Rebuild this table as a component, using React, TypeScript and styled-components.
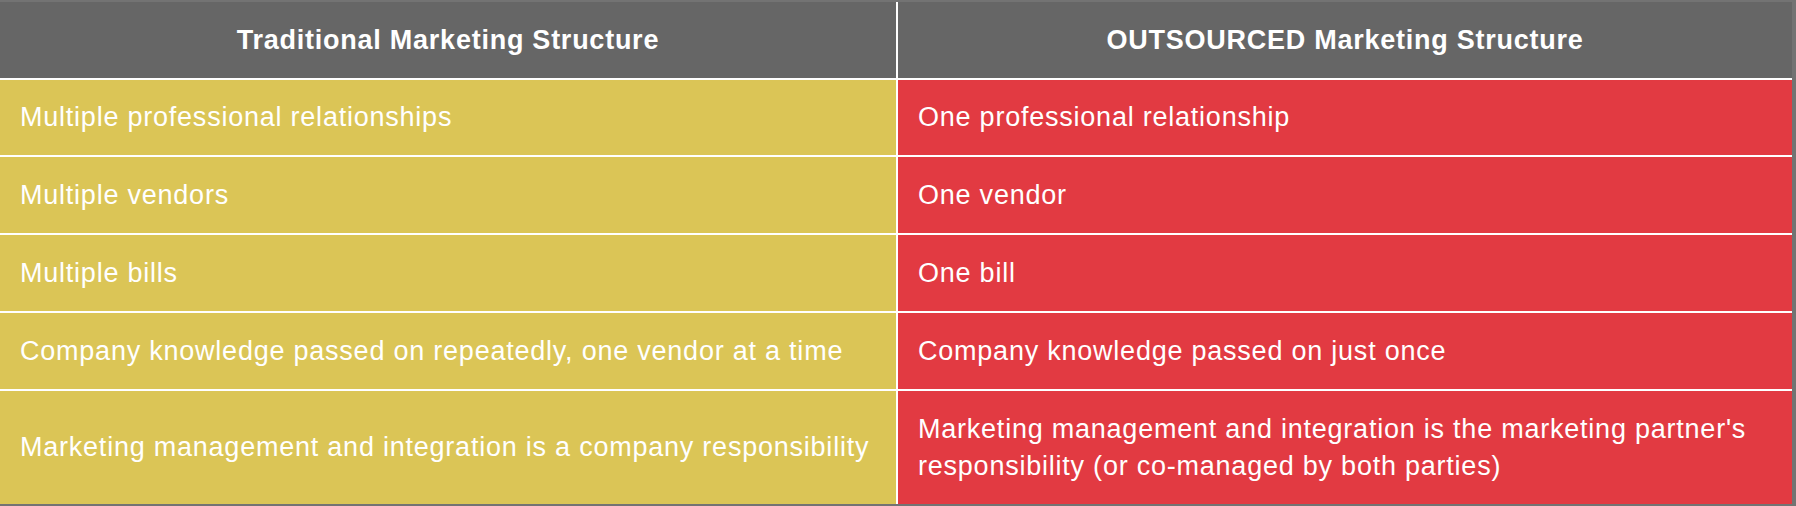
import React from "react";
import styled, { createGlobalStyle } from "styled-components";

const GlobalStyle = createGlobalStyle`
  html, body {
    margin: 0;
    padding: 0;
    background: #737373;
  }
  body {
    font-family: "Liberation Sans", Arial, Helvetica, sans-serif;
  }
`;

const Frame = styled.div`
  width: 1796px;
  height: 506px;
  box-sizing: border-box;
  padding: 2px 4px 2px 0;
  background: #737373;
`;

const Table = styled.div`
  display: grid;
  grid-template-columns: 896px 894px;
  grid-template-rows: 76px 75px 76px 76px 76px 113px;
  gap: 2px;
  background: #ffffff;
  height: 100%;
`;

type Tone = "head" | "yellow" | "red";

const tones: Record<Tone, string> = {
  head: "#666666",
  yellow: "#dbc556",
  red: "#e23a42",
};

const Cell = styled.div<{ $tone: Tone }>`
  display: flex;
  align-items: center;
  justify-content: ${(p) => (p.$tone === "head" ? "center" : "flex-start")};
  text-align: ${(p) => (p.$tone === "head" ? "center" : "left")};
  padding: 0 20px;
  background: ${(p) => tones[p.$tone]};
  color: #ffffff;
  font-size: 27px;
  line-height: 37px;
  font-weight: ${(p) => (p.$tone === "head" ? 700 : 400)};
  letter-spacing: ${(p) => (p.$tone === "head" ? "0.75px" : "0.77px")};
  -webkit-font-smoothing: antialiased;
`;

const rows: [string, string][] = [
  ["Multiple professional relationships", "One professional relationship"],
  ["Multiple vendors", "One vendor"],
  ["Multiple bills", "One bill"],
  [
    "Company knowledge passed on repeatedly, one vendor at a time",
    "Company knowledge passed on just once",
  ],
  [
    "Marketing management and integration is a company responsibility",
    "Marketing management and integration is the marketing partner's responsibility (or co-managed by both parties)",
  ],
];

export default function App() {
  return (
    <>
      <GlobalStyle />
      <Frame>
        <Table>
          <Cell $tone="head">Traditional Marketing Structure</Cell>
          <Cell $tone="head">OUTSOURCED Marketing Structure</Cell>
          {rows.map(([a, b]) => (
            <React.Fragment key={a}>
              <Cell $tone="yellow">{a}</Cell>
              <Cell $tone="red">{b}</Cell>
            </React.Fragment>
          ))}
        </Table>
      </Frame>
    </>
  );
}
